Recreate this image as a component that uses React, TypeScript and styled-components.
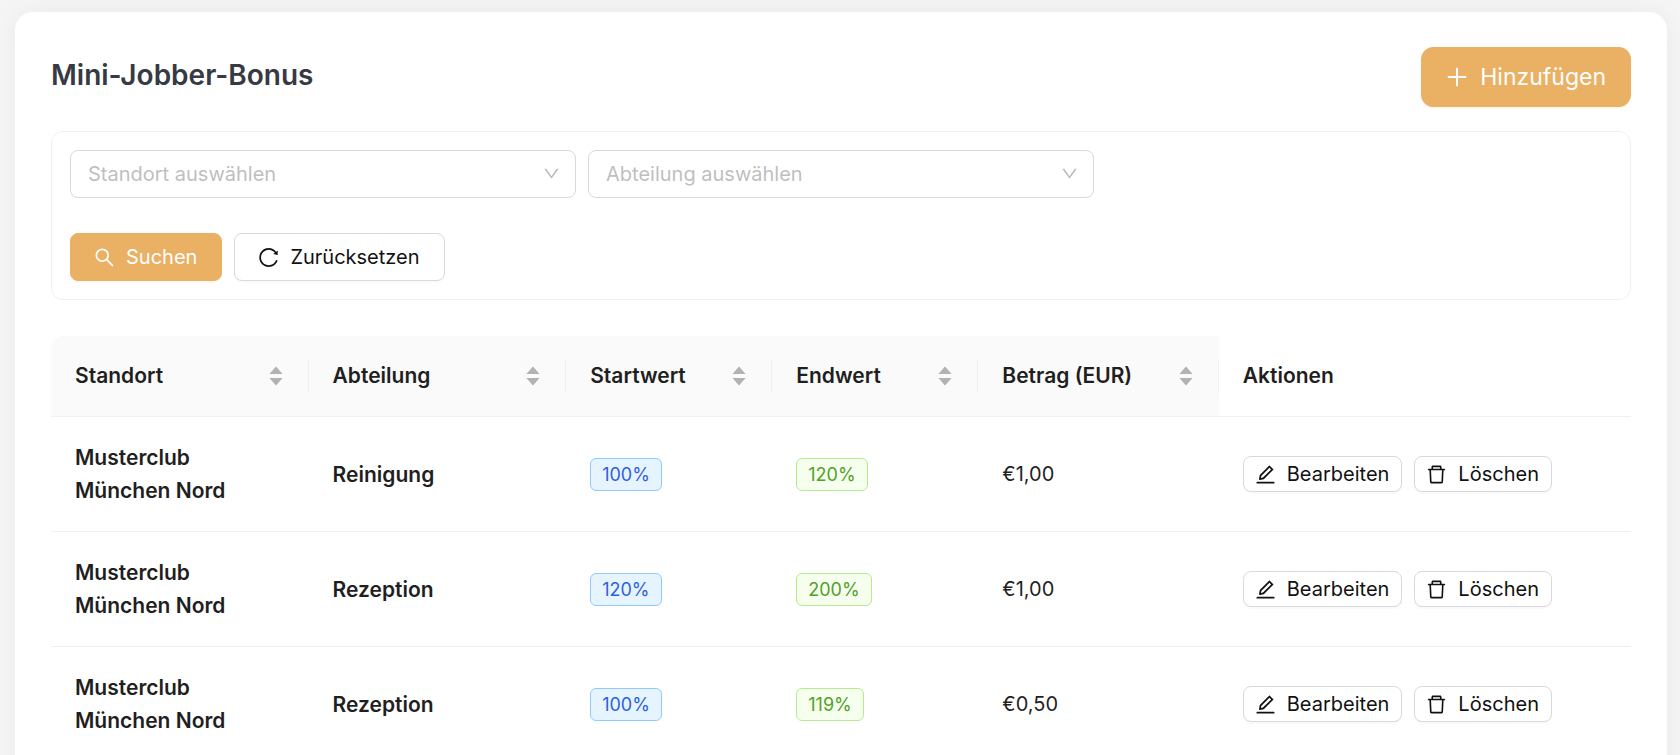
import React from "react";
import styled, { createGlobalStyle } from "styled-components";
import {
  AiOutlineDelete,
  AiOutlineDown,
  AiOutlineEdit,
  AiOutlinePlus,
  AiOutlineReload,
  AiOutlineSearch,
} from "react-icons/ai";

const GlobalStyle = createGlobalStyle`
  * { box-sizing: border-box; }
  body {
    margin: 0;
    background: #f5f5f5;
    color: #1f1f1f;
    font-family: Inter, "Liberation Sans", sans-serif;
    font-size: 20px;
    line-height: 33px;
  }
  button, select { font: inherit; }
`;

const Page = styled.div`
  padding: 12px 13px 12px 15px;
`;

const Card = styled.main`
  padding: 35px 36px 36px;
  background: #fff;
  border-radius: 18px;
  box-shadow: 0 0 24px rgba(0, 0, 0, 0.05);
`;

const Header = styled.header`
  display: flex;
  align-items: flex-start;
  justify-content: space-between;
  margin-bottom: 24px;
`;

const Title = styled.h1`
  margin: 8px 0 0;
  color: #373a42;
  font-size: 28px;
  font-weight: 600;
  line-height: 40px;
`;

type ButtonKind = { $primary?: boolean; $size?: "small" | "middle" | "large" };

const heights = { small: 36, middle: 48, large: 60 };
const paddings = { small: "0 12px 0 10px", middle: "0 24px 0 22px", large: "0 24px 0 22px" };

const Button = styled.button<ButtonKind>`
  display: inline-flex;
  align-items: center;
  gap: 10px;
  height: ${({ $size = "middle" }) => heights[$size]}px;
  padding: ${({ $size = "middle" }) => paddings[$size]};
  border: 1px solid ${({ $primary }) => ($primary ? "#eab064" : "#d9d9d9")};
  border-radius: ${({ $size }) => ($size === "large" ? 12 : 8)}px;
  background: ${({ $primary }) => ($primary ? "#eab064" : "#fff")};
  box-shadow: 0 2px 0 ${({ $primary }) => ($primary ? "rgba(255, 200, 120, 0.1)" : "rgba(0, 0, 0, 0.02)")};
  color: ${({ $primary }) => ($primary ? "#fff" : "#111")};
  font-size: ${({ $size }) => ($size === "large" ? 23 : 20)}px;
  white-space: nowrap;
  cursor: pointer;

  svg {
    flex: none;
    width: ${({ $size }) => ($size === "large" ? 26 : 23)}px;
    height: ${({ $size }) => ($size === "large" ? 26 : 23)}px;
  }
`;

const Filters = styled.form`
  display: grid;
  gap: 35px;
  margin-bottom: 36px;
  padding: 18px;
  border: 1px solid #f0f0f0;
  border-radius: 12px;
`;

const FilterFields = styled.div`
  display: grid;
  grid-template-columns: repeat(3, 1fr);
  gap: 12px;
`;

const SelectField = styled.label`
  position: relative;
  display: block;
  color: #b8b8b8;

  svg {
    position: absolute;
    top: 14px;
    right: 15px;
    width: 19px;
    height: 19px;
    pointer-events: none;
  }
`;

const Select = styled.select`
  display: block;
  width: 100%;
  height: 48px;
  padding: 0 48px 0 17px;
  border: 1px solid #d9d9d9;
  border-radius: 8px;
  background: #fff;
  color: #bfbfbf;
  appearance: none;
`;

const ButtonRow = styled.div`
  display: flex;
  gap: 12px;
`;

const Table = styled.table`
  width: 100%;
  table-layout: fixed;
  border-collapse: separate;
  border-spacing: 0;
`;

const HeadCell = styled.th<{ $plain?: boolean }>`
  position: relative;
  padding: 24px;
  border-bottom: 1px solid #f0f0f0;
  background: ${({ $plain }) => ($plain ? "#fff" : "#fafafa")};
  font-size: 21px;
  font-weight: 600;
  line-height: 32px;
  text-align: left;
  white-space: nowrap;

  &:first-child {
    border-top-left-radius: 12px;
  }

  &:not(:last-child)::after {
    content: "";
    position: absolute;
    top: 24px;
    right: 0;
    width: 1px;
    height: 33px;
    background: #f0f0f0;
  }
`;

const HeadContent = styled.div`
  display: flex;
  align-items: center;
  justify-content: space-between;
`;

const SortIcon = styled.svg`
  flex: none;
  width: 18px;
  height: 20px;
  fill: #b2b2b2;
`;

const Cell = styled.td<{ $strong?: boolean }>`
  padding: 24px;
  border-bottom: 1px solid #f0f0f0;
  font-size: ${({ $strong }) => ($strong ? 21 : 20)}px;
  font-weight: ${({ $strong }) => ($strong ? 600 : 400)};
  vertical-align: middle;
`;

const Tag = styled.span<{ $tone: "blue" | "green" }>`
  display: inline-block;
  padding: 0 11px;
  border: 1px solid ${({ $tone }) => ($tone === "blue" ? "#91caff" : "#b7eb8f")};
  border-radius: 6px;
  background: ${({ $tone }) => ($tone === "blue" ? "#e6f4ff" : "#f6ffed")};
  color: ${({ $tone }) => ($tone === "blue" ? "#2f5fe0" : "#52a02b")};
  font-size: 18px;
  line-height: 31px;
  vertical-align: middle;
`;

const columns = [
  { label: "Standort", width: 150 },
  { label: "Abteilung", width: 150 },
  { label: "Startwert", width: 120 },
  { label: "Endwert", width: 120 },
  { label: "Betrag (EUR)", width: 140 },
  { label: "Aktionen", width: 240, plain: true },
];

const rows = [
  { site: "Musterclub München Nord", team: "Reinigung", start: "100%", end: "120%", amount: "€1,00" },
  { site: "Musterclub München Nord", team: "Rezeption", start: "120%", end: "200%", amount: "€1,00" },
  { site: "Musterclub München Nord", team: "Rezeption", start: "100%", end: "119%", amount: "€0,50" },
];

function Sorter() {
  return (
    <SortIcon viewBox="0 0 18 20" aria-hidden="true">
      <path d="M9 0.4 L15.6 8.1 H2.4 Z M9 19.6 L2.4 11.9 H15.6 Z" />
    </SortIcon>
  );
}

function FilterSelect({ placeholder }: { placeholder: string }) {
  return (
    <SelectField>
      <Select aria-label={placeholder} defaultValue="">
        <option value="">{placeholder}</option>
      </Select>
      <AiOutlineDown />
    </SelectField>
  );
}

export default function App() {
  return (
    <Page>
      <GlobalStyle />
      <Card>
        <Header>
          <Title>Mini-Jobber-Bonus</Title>
          <Button type="button" $primary $size="large">
            <AiOutlinePlus />
            Hinzufügen
          </Button>
        </Header>

        <Filters onSubmit={(event) => event.preventDefault()}>
          <FilterFields>
            <FilterSelect placeholder="Standort auswählen" />
            <FilterSelect placeholder="Abteilung auswählen" />
          </FilterFields>
          <ButtonRow>
            <Button type="submit" $primary>
              <AiOutlineSearch />
              Suchen
            </Button>
            <Button type="reset">
              <AiOutlineReload />
              Zurücksetzen
            </Button>
          </ButtonRow>
        </Filters>

        <Table>
          <colgroup>
            {columns.map((column) => (
              <col key={column.label} width={column.width} />
            ))}
          </colgroup>
          <thead>
            <tr>
              {columns.map((column) => (
                <HeadCell key={column.label} scope="col" $plain={column.plain}>
                  <HeadContent>
                    {column.label}
                    {!column.plain && <Sorter />}
                  </HeadContent>
                </HeadCell>
              ))}
            </tr>
          </thead>
          <tbody>
            {rows.map((row, index) => (
              <tr key={index}>
                <Cell $strong>{row.site}</Cell>
                <Cell $strong>{row.team}</Cell>
                <Cell>
                  <Tag $tone="blue">{row.start}</Tag>
                </Cell>
                <Cell>
                  <Tag $tone="green">{row.end}</Tag>
                </Cell>
                <Cell>{row.amount}</Cell>
                <Cell>
                  <ButtonRow>
                    <Button type="button" $size="small">
                      <AiOutlineEdit />
                      Bearbeiten
                    </Button>
                    <Button type="button" $size="small">
                      <AiOutlineDelete />
                      Löschen
                    </Button>
                  </ButtonRow>
                </Cell>
              </tr>
            ))}
          </tbody>
        </Table>
      </Card>
    </Page>
  );
}
